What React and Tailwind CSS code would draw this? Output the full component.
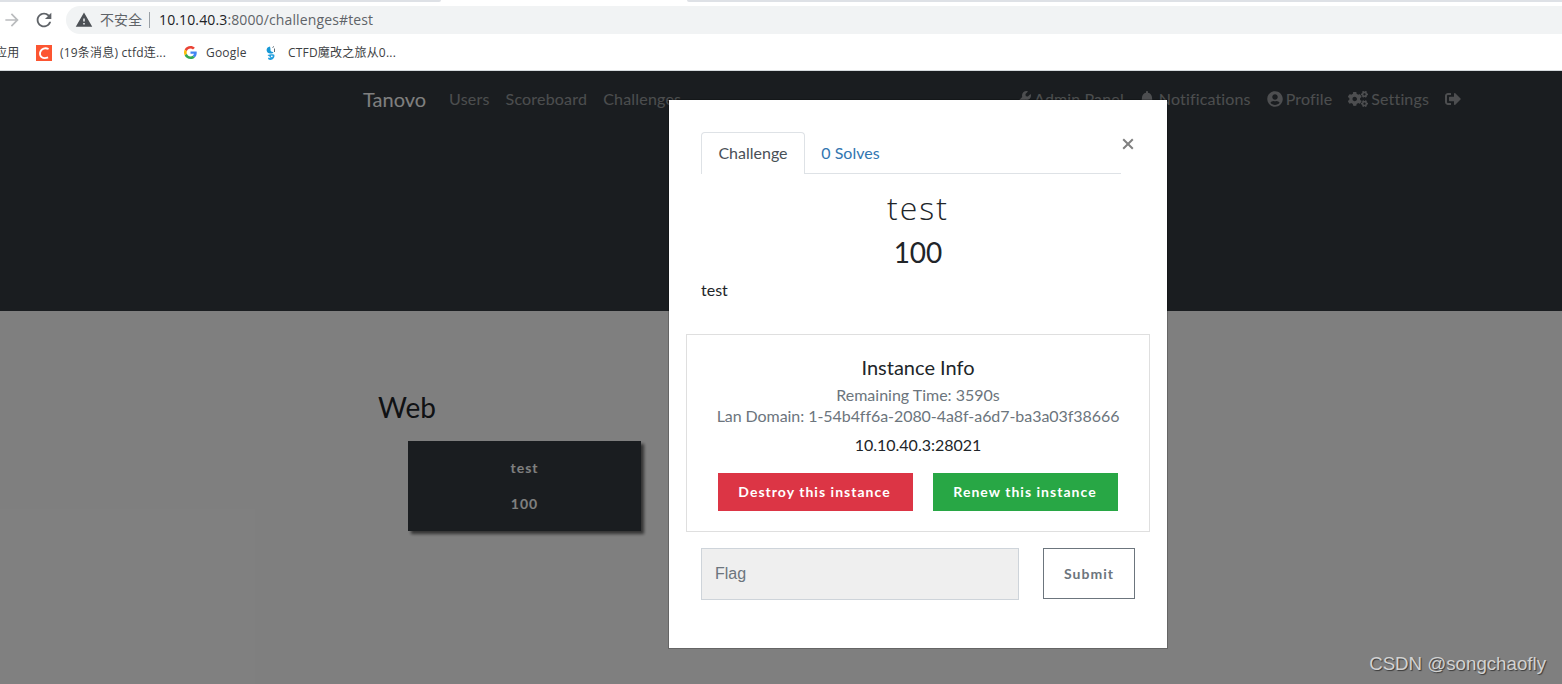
import React from "react";
import { FaWrench, FaBell, FaUserCircle, FaCogs, FaSignOutAlt } from "react-icons/fa";
import { MdArrowForward, MdRefresh, MdWarning } from "react-icons/md";

function GoogleIcon() {
  return (
    <svg viewBox="0 0 48 48" className="mx-[0.5px] ml-[8.5px] size-[13px]">
      <path fill="#EA4335" d="M24 9.5c3.5 0 6.7 1.2 9.2 3.6l6.9-6.9C35.9 2.4 30.5 0 24 0 14.6 0 6.5 5.4 2.6 13.2l8 6.2C12.4 13.7 17.7 9.5 24 9.5z" />
      <path fill="#4285F4" d="M47 24.5c0-1.6-.2-3.1-.4-4.5H24v9h12.9c-.6 3-2.2 5.5-4.7 7.2l7.7 6C44.4 38 47 31.8 47 24.5z" />
      <path fill="#FBBC05" d="M10.5 28.6c-.5-1.5-.8-3-.8-4.6s.3-3.1.8-4.6l-8-6.2C.9 16.5 0 20.1 0 24s.9 7.5 2.6 10.800l7.900-6.200z" />
      <path fill="#34A853" d="M24 48c6.5 0 11.9-2.1 15.9-5.8l-7.7-6c-2.2 1.4-4.9 2.3-8.2 2.3-6.3 0-11.6-4.2-13.5-9.900l-8 6.200C6.500 42.600 14.600 48 24 48z" />
    </svg>
  );
}

function BrowserBar() {
  return (
    <header className="h-[71px] shrink-0 overflow-hidden border-b border-[#d5dadd] bg-white font-['Open_Sans','Noto_Sans_CJK_SC',sans-serif]">
      <div className="flex h-[6px] justify-between">
        <div className="h-[2px] w-[441px] rounded-br-[3px] bg-[#dee1e6]" />
        <div className="h-[2px] w-[875px] rounded-bl-[3px] bg-[#dee1e6]" />
      </div>
      <div className="flex h-7 items-center">
        <MdArrowForward className="ml-[2px] size-5 text-[#babcbe]" />
        <MdRefresh className="ml-[11px] size-[22px] text-[#5f6368]" />
        <div className="ml-[11px] flex h-7 flex-1 items-center rounded-l-full bg-[#f1f3f4] whitespace-nowrap">
          <MdWarning className="ml-[9px] size-[18px] text-[#4d5156]" />
          <span className="ml-[7px] text-sm text-[#5f6368]">不安全</span>
          <span className="ml-[7px] h-4 w-px bg-[#9aa0a6]" />
          <span className="ml-[9px] text-sm tracking-[0.13px] text-[#5f6368]">
            <span className="text-[#202124]">10.10.40.3</span>:8000/challenges#test
          </span>
        </div>
      </div>
      <div className="flex h-9 items-center pt-px text-xs tracking-[0.2px] whitespace-nowrap text-[#3c4043]">
        <span className="-ml-[5px] w-[25px]">应用</span>
        <span className="ml-4 flex size-4 items-center justify-center bg-[#fc5531]">
          <svg viewBox="0 0 16 16" className="size-4" fill="none" stroke="white" strokeWidth="1.8">
            <path d="M12.6 4C9.5 2.6 5.1 3 4.100 7.500C3.300 11.800 6.800 14.300 12.100 12.300" />
          </svg>
        </span>
        <span className="ml-2 w-[115px]">(19条消息) ctfd连...</span>
        <GoogleIcon />
        <span className="ml-[9px] w-[43px]">Google</span>
        <svg viewBox="0 0 16 16" className="ml-[15px] size-4">
          <path d="M6 1.500C2 2 1.500 7 5 8.300C7 9 9 8.500 9.500 7C7.500 7.300 6 6 6.500 4Z" fill="#1698d6" />
          <path d="M8.500 2.500l1.500-1M10.500 3.500v3.500" stroke="#5c6b76" strokeWidth="1" />
          <path d="M3.500 10C5.500 9.300 9.500 8.800 10.300 9.800C11 12.500 9 15 6.500 15C4.500 15 3.500 13.500 4.300 12.500C5 13 6 13 6.500 12.300C5.500 11.500 4.500 11.200 3.500 10Z" fill="#229fdf" />
          <circle cx="7.800" cy="11.300" r="0.900" fill="white" />
        </svg>
        <span className="ml-2">CTFD魔改之旅从0...</span>
      </div>
    </header>
  );
}

function NavLink({ icon: Icon, iconClass = "size-4", children }) {
  return (
    <a className="flex items-center gap-[3px] px-2 text-base leading-6">
      {Icon && <Icon className={iconClass} />}
      {children}
    </a>
  );
}

function Navbar() {
  return (
    <nav className="flex h-14 items-center pr-[93px] pl-[363px] text-white/50">
      <span className="mr-[15px] text-xl leading-[30px] text-white">Tanovo</span>
      <div className="flex tracking-[0.2px]">
        <NavLink>Users</NavLink>
        <NavLink>Scoreboard</NavLink>
        <NavLink>Challenges</NavLink>
      </div>
      <div className="ml-auto flex tracking-[0.15px]">
        <NavLink icon={FaWrench}>Admin Panel</NavLink>
        <NavLink icon={FaBell} iconClass="mr-[2px] h-4 w-[14px]">Notifications</NavLink>
        <NavLink icon={FaUserCircle}>Profile</NavLink>
        <NavLink icon={FaCogs} iconClass="h-4 w-5">Settings</NavLink>
        <NavLink icon={FaSignOutAlt} />
      </div>
    </nav>
  );
}

function ChallengeBoard() {
  return (
    <section className="pt-[79px] pl-[378px]">
      <h3 className="text-[28px] leading-[34px] text-[#212529]">Web</h3>
      <button className="mt-[17px] ml-[30px] flex h-[90px] w-[233px] flex-col items-center justify-center gap-[15px] bg-[#343a40] pb-[2px] text-sm leading-[21px] font-bold tracking-[1px] text-white shadow-[3px_3px_3px_rgba(0,0,0,0.6)]">
        <span>test</span>
        <span>100</span>
      </button>
    </section>
  );
}

function InstanceCard() {
  return (
    <section className="mx-[17px] mt-8 flex h-[198px] flex-col items-center border border-[#dfdfdf] pt-5">
      <h5 className="text-xl leading-6 text-[#212529]">Instance Info</h5>
      <p className="mt-[5px] text-base leading-[21px] text-[#6c757d]">Remaining Time: 3590s</p>
      <p className="text-base leading-[21px] tracking-[-0.06px] text-[#6c757d]">Lan Domain: 1-54b4ff6a-2080-4a8f-a6d7-ba3a03f38666</p>
      <p className="mt-[7px] text-base leading-6">10.10.40.3:28021</p>
      <div className="mt-4 flex gap-5 text-sm font-bold tracking-[1.03px] text-white">
        <button className="h-[38px] w-[195px] bg-[#dc3545] pr-[2px]">Destroy this instance</button>
        <button className="h-[38px] w-[185px] bg-[#28a745] pr-px">Renew this instance</button>
      </div>
    </section>
  );
}

function ChallengeModal() {
  return (
    <div className="absolute top-7 left-[668px] h-[550px] w-[500px] border border-black/20 bg-white bg-clip-padding text-[#212529]">
      <div className="flex px-8 pt-8">
        <div className="flex h-[42px] w-[420px] border-b border-[#dee2e6] text-base">
          <span className="flex h-[42px] w-[104px] items-center justify-center rounded-t-[4px] border border-b-0 border-[#dee2e6] bg-white pb-px text-[#495057]">
            Challenge
          </span>
          <span className="flex w-[91px] items-center justify-center pt-px text-[#3276b1]">0 Solves</span>
        </div>
        <svg viewBox="0 0 12 12" className="mt-[6px] ml-px size-3 text-[#808080]" fill="none" stroke="currentColor" strokeWidth="2">
          <path d="M1.2 1.2L10.8 10.8M10.8 1.2L1.2 10.8" />
        </svg>
      </div>
      <h2 className="mt-[15px] text-center font-['Open_Sans',sans-serif] text-[32px] leading-[38px] font-[340] tracking-[2px]">test</h2>
      <h3 className="mt-2 text-center text-[28px] leading-[34px]">100</h3>
      <p className="mt-[9px] ml-8 text-base leading-6">test</p>
      <InstanceCard />
      <div className="mt-4 flex px-8">
        <input
          placeholder="Flag"
          className="h-[52px] w-[318px] border border-[#ced4da] bg-[#efefef] px-[13px] font-['Liberation_Sans',sans-serif] text-base placeholder:text-[#6c757d]"
        />
        <button className="ml-6 h-[51px] w-[92px] border border-[#6c757d] text-sm font-bold tracking-[1px] text-[#6c757d]">
          Submit
        </button>
      </div>
    </div>
  );
}

export default function App() {
  return (
    <div className="flex h-[684px] w-[1562px] flex-col overflow-hidden bg-white">
      <BrowserBar />
      <main className="relative flex-1 overflow-hidden font-['Lato',sans-serif]">
        <div className="h-60 bg-[#343a40]">
          <Navbar />
        </div>
        <ChallengeBoard />
        <div className="absolute inset-0 bg-black/50" />
        <ChallengeModal />
        <span className="absolute right-4 bottom-[8px] font-['Liberation_Sans',sans-serif] text-[18.7px] leading-6 text-[#d2d2d2] [text-shadow:1px_1px_1px_rgba(0,0,0,0.55)]">
          CSDN @songchaofly
        </span>
      </main>
    </div>
  );
}
